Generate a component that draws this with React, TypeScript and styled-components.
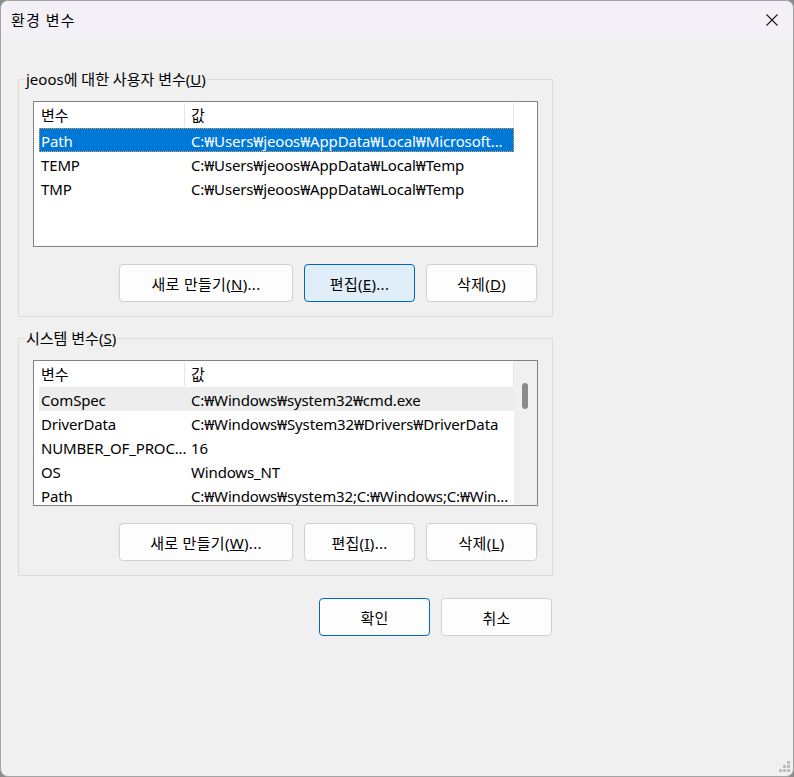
import * as React from 'react';
import styled, { createGlobalStyle } from 'styled-components';

const GlobalStyle = createGlobalStyle`
  html, body {
    margin: 0;
    padding: 0;
    background: #8c8c8c;
  }
  * {
    box-sizing: border-box;
  }
`;

const uiFont = `"Noto Sans", "Noto Sans CJK KR", sans-serif`;

const Window = styled.div`
  position: relative;
  width: 794px;
  height: 777px;
  display: flex;
  flex-direction: column;
  background: #f0f0f0;
  border: 1px solid #a3a3a3;
  border-radius: 8px;
  overflow: hidden;
  font-family: ${uiFont};
  font-size: 15px;
  color: #000;
`;

const TitleBar = styled.div`
  flex: none;
  height: 37px;
  display: flex;
  align-items: center;
  justify-content: space-between;
  padding: 0 15px 0 10px;
  background: #f3f1f7;
`;

const Title = styled.span`
  font-size: 15px;
  letter-spacing: 1.1px;
`;

const CloseButton = styled.div`
  width: 12px;
  height: 12px;
  display: flex;
`;

const Body = styled.div`
  flex: 1;
  display: flex;
  flex-direction: column;
  padding: 30px 0 0 17px;
`;

const Group = styled.fieldset<{ $gap?: number }>`
  width: 535px;
  margin: ${p => p.$gap ?? 0}px 0 0 0;
  padding: 11px 0 14px 0;
  border: 1px solid #dcdcdc;
  min-inline-size: 0;
`;

const Legend = styled.legend`
  margin-left: 6px;
  padding: 0 1px;
  line-height: 22px;
`;

const GroupBody = styled.div`
  display: flex;
  flex-direction: column;
  gap: 17px;
  padding: 0 14px;
`;

const ListBox = styled.div`
  width: 505px;
  height: 146px;
  display: flex;
  background: #fff;
  border: 1px solid #828282;
  overflow: hidden;
`;

const ListMain = styled.div`
  width: 480px;
  flex: none;
  display: flex;
  flex-direction: column;
`;

const Header = styled.div`
  flex: none;
  height: 26px;
  display: flex;
`;

const HeaderCell = styled.div<{ $width: number; $pad: number }>`
  width: ${p => p.$width}px;
  flex: none;
  display: flex;
  align-items: center;
  padding: 0 0 2px ${p => p.$pad}px;
  border-right: 1px solid #e5e5e5;
  margin: 1px 0;
`;

const Row = styled.div<{ $selected?: boolean; $hover?: boolean }>`
  flex: none;
  height: 24px;
  width: 475px;
  margin-left: 5px;
  padding-top: 1px;
  display: flex;
  align-items: center;
  white-space: nowrap;
  letter-spacing: -0.15px;
  background: ${p => (p.$selected ? '#0078d7' : p.$hover ? '#ededed' : 'transparent')};
  color: ${p => (p.$selected ? '#fff' : '#000')};
  outline: ${p => (p.$selected ? '1px dotted #e0a050' : 'none')};
  outline-offset: -1px;
`;

const NameCell = styled.div`
  width: 150px;
  flex: none;
  padding-left: 2px;
  overflow: hidden;
`;

const ValueCell = styled.div`
  flex: 1;
  padding-left: 2px;
  overflow: hidden;
`;

const ScrollTrack = styled.div`
  flex: 1;
  background: #f0f0f0;
  padding: 22px 0 0 8px;
`;

const ScrollThumb = styled.div`
  width: 6px;
  height: 26px;
  border-radius: 3px;
  background: #8a8a8a;
`;

const ButtonRow = styled.div`
  display: flex;
  justify-content: flex-end;
  gap: 11px;
  padding-right: 1px;
`;

const FooterRow = styled(ButtonRow)`
  width: 535px;
  margin-top: 22px;
`;

const Button = styled.button<{ $width: number; $primary?: boolean; $focused?: boolean }>`
  width: ${p => p.$width}px;
  height: 38px;
  padding: 0;
  font-family: ${uiFont};
  font-size: 15px;
  color: #000;
  background: ${p => (p.$focused ? '#e0eef9' : '#fdfdfd')};
  border: 1px solid ${p => (p.$primary || p.$focused ? '#0067c0' : '#d0d0d0')};
  border-radius: 4px;
  letter-spacing: 0.3px;
`;

const ResizeGrip = styled.svg`
  position: absolute;
  right: 2px;
  bottom: 3px;
`;

type Variable = { name: string; value: string };

const userVars: Variable[] = [
  { name: 'Path', value: 'C:₩Users₩jeoos₩AppData₩Local₩Microsoft...' },
  { name: 'TEMP', value: 'C:₩Users₩jeoos₩AppData₩Local₩Temp' },
  { name: 'TMP', value: 'C:₩Users₩jeoos₩AppData₩Local₩Temp' },
];

const systemVars: Variable[] = [
  { name: 'ComSpec', value: 'C:₩Windows₩system32₩cmd.exe' },
  { name: 'DriverData', value: 'C:₩Windows₩System32₩Drivers₩DriverData' },
  { name: 'NUMBER_OF_PROC...', value: '16' },
  { name: 'OS', value: 'Windows_NT' },
  { name: 'Path', value: 'C:₩Windows₩system32;C:₩Windows;C:₩Win...' },
];

const VariableList = ({
  items,
  selected,
  hover,
  scroll,
}: {
  items: Variable[];
  selected?: number;
  hover?: number;
  scroll?: boolean;
}) => (
  <ListBox>
    <ListMain>
      <Header>
        <HeaderCell $width={151} $pad={7}>변수</HeaderCell>
        <HeaderCell $width={329} $pad={6}>값</HeaderCell>
      </Header>
      {items.map((item, i) => (
        <Row key={item.name + i} $selected={i === selected} $hover={i === hover}>
          <NameCell>{item.name}</NameCell>
          <ValueCell>{item.value}</ValueCell>
        </Row>
      ))}
    </ListMain>
    {scroll && (
      <ScrollTrack>
        <ScrollThumb />
      </ScrollTrack>
    )}
  </ListBox>
);

const Mnemonic = ({ label, k, tail = '' }: { label: string; k: string; tail?: string }) => (
  <>
    {label}(<u>{k}</u>){tail}
  </>
);

export default function App() {
  return (
    <>
      <GlobalStyle />
      <Window>
        <TitleBar>
          <Title>환경 변수</Title>
          <CloseButton>
            <svg width="12" height="12" viewBox="0 0 12 12">
              <path d="M0.5 0.5 L11.5 11.5 M11.5 0.5 L0.5 11.5" stroke="#1a1a1a" strokeWidth="1.1" />
            </svg>
          </CloseButton>
        </TitleBar>
        <Body>
          <Group>
            <Legend>
              jeoos에 대한 사용자 변수(<u>U</u>)
            </Legend>
            <GroupBody>
              <VariableList items={userVars} selected={0} />
              <ButtonRow>
                <Button $width={174}>
                  <Mnemonic label="새로 만들기" k="N" tail="..." />
                </Button>
                <Button $width={111} $focused>
                  <Mnemonic label="편집" k="E" tail="..." />
                </Button>
                <Button $width={111}>
                  <Mnemonic label="삭제" k="D" />
                </Button>
              </ButtonRow>
            </GroupBody>
          </Group>
          <Group $gap={10}>
            <Legend>
              시스템 변수(<u>S</u>)
            </Legend>
            <GroupBody>
              <VariableList items={systemVars} hover={0} scroll />
              <ButtonRow>
                <Button $width={174}>
                  <Mnemonic label="새로 만들기" k="W" tail="..." />
                </Button>
                <Button $width={111}>
                  <Mnemonic label="편집" k="I" tail="..." />
                </Button>
                <Button $width={111}>
                  <Mnemonic label="삭제" k="L" />
                </Button>
              </ButtonRow>
            </GroupBody>
          </Group>
          <FooterRow>
            <Button $width={111} $primary>
              확인
            </Button>
            <Button $width={111}>취소</Button>
          </FooterRow>
        </Body>
        <ResizeGrip width="12" height="12" viewBox="0 0 12 12">
          <rect x="8" y="0" width="3" height="3" fill="#bdbdbd" />
          <rect x="4" y="4" width="3" height="3" fill="#bdbdbd" />
          <rect x="8" y="4" width="3" height="3" fill="#bdbdbd" />
          <rect x="0" y="8" width="3" height="3" fill="#bdbdbd" />
          <rect x="4" y="8" width="3" height="3" fill="#bdbdbd" />
          <rect x="8" y="8" width="3" height="3" fill="#bdbdbd" />
        </ResizeGrip>
      </Window>
    </>
  );
}
